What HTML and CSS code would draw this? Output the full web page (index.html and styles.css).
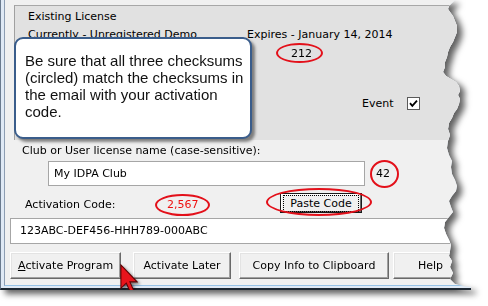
FILE: index.html
```html
<!DOCTYPE html>
<html>
<head>
<meta charset="utf-8">
<link rel="stylesheet" href="styles.css">
</head>
<body>
<div class="shot">
  <div class="win">
    <div class="frame">
      <div class="client">
        <section class="panel">
          <div class="p-title">Existing License</div>
          <div class="p-row">
            <span class="p-left">Currently - Unregistered Demo</span>
            <span>Expires - January 14, 2014</span>
          </div>
          <div class="p-sum"><span class="circled c212">212</span></div>
          <div class="p-event">
            <span>Event</span>
            <span class="check"><svg width="11" height="11" viewBox="0 0 11 11"><path d="M2 5.2 L4.3 7.8 L9 2.6" fill="none" stroke="#000" stroke-width="1.8"/></svg></span>
          </div>
        </section>
        <div class="lbl-club">Club or User license name (case-sensitive):</div>
        <div class="name-row">
          <div class="field name">My IDPA Club</div>
          <span class="circled c42">42</span>
        </div>
        <div class="code-row">
          <span class="lbl-code">Activation Code:</span>
          <span class="num-cell"><span class="circled c2567">2,567</span></span>
          <span class="circled cpaste"><button class="btn paste"><span class="focus">Paste Code</span></button></span>
        </div>
        <div class="field code">123ABC-DEF456-HHH789-000ABC</div>
        <div class="btn-row">
          <button class="btn b-act"><u>A</u>ctivate Program</button>
          <button class="btn b-later">Activate Later</button>
          <button class="btn b-copy">Copy Info to Clipboard</button>
          <button class="btn b-help">Help</button>
        </div>
      </div>
    </div>
    <div class="callout">Be sure that all three checksums (circled) match the checksums in the email with your activation code.</div>
    <svg class="cursor" width="18" height="30" viewBox="0 0 12 20"><path d="M0.6 0.6 L0.6 16.2 L4.2 12.8 L6.8 18.6 L9.1 17.6 L6.6 11.9 L11.4 11.9 Z" fill="#e8141c" stroke="#5a0000" stroke-width="0.7" stroke-linejoin="miter"/></svg>
  </div>
</div>
</body>
</html>
```

FILE: styles.css
```css
html, body {
  margin: 0;
  padding: 0;
  background: #ffffff;
}
body {
  width: 488px;
  height: 306px;
  overflow: hidden;
  font-family: "DejaVu Sans", sans-serif;
  font-size: 11px;
  line-height: 13px;
  color: #000;
}
.shot {
  width: 472px;
  filter: drop-shadow(5px 4px 3px rgba(0, 0, 0, 0.62));
}
.win {
  position: relative;
  width: 472px;
  height: 290px;
  box-sizing: border-box;
  border-left: 1px solid #6a7a8e;
  border-bottom: 2px solid #1d2731;
  background: #dfe9f5;
  clip-path: polygon(0 0, 455px 0, 452px 3px, 449px 6px, 448px 9px, 450px 12px, 453px 16px, 455px 21px, 457px 26px, 457px 32px, 455px 37px, 453px 42px, 450px 47px, 448px 52px, 447px 57px, 445px 62px, 445px 67px, 443px 72px, 446px 76px, 451px 79px, 456px 82px, 459px 86px, 460px 91px, 458px 95px, 460px 99px, 459px 104px, 457px 109px, 454px 113px, 452px 118px, 449px 123px, 448px 129px, 450px 135px, 448px 141px, 447px 148px, 449px 155px, 452px 161px, 451px 167px, 452px 174px, 455px 180px, 457px 186px, 456px 191px, 452px 196px, 449px 201px, 451px 207px, 453px 212px, 449px 217px, 445px 222px, 444px 228px, 446px 234px, 449px 240px, 451px 245px, 450px 251px, 449px 256px, 452px 261px, 450px 267px, 453px 273px, 450px 279px, 455px 284px, 463px 286px, 471px 287px, 471px 290px, 0 290px);
}
.frame {
  height: 100%;
  box-sizing: border-box;
  padding: 0 0 2px 3px;
}
.client {
  height: 100%;
  box-sizing: border-box;
  background: #f0f0f0;
  border-left: 1px solid #8d9db2;
  border-bottom: 1px solid #96c2e6;
  padding: 5px 0 0 5px;
}
.panel {
  margin-left: 4px;
  background: #e1e1e1;
  border-top: 1px solid #a7a7a7;
  border-left: 1px solid #a0a0a0;
  padding: 4px 0 30px 13px;
}
.p-row {
  margin-top: 5px;
  display: flex;
}
.p-left {
  width: 219px;
  flex: none;
}
.p-sum {
  margin-top: 6px;
  padding-left: 263px;
}
.p-event {
  margin-top: 37px;
  padding-left: 334px;
  display: flex;
  align-items: center;
  gap: 13px;
}
.check {
  width: 11px;
  height: 11px;
  border: 1px solid #5a5a5a;
  background: #fff;
  display: block;
}
.check svg {
  display: block;
}
.circled {
  position: relative;
  display: inline-block;
}
.circled::after {
  content: "";
  position: absolute;
  border: 2px solid #e3101a;
  border-radius: 50%;
  box-sizing: border-box;
}
.c212::after {
  inset: -4px -11px -3px -15px;
}
.c42::after {
  inset: -7px -9px -8px -6px;
}
.c2567 {
  color: #ee1111;
}
.c2567::after {
  inset: -4px -11px -5px -12px;
}
.cpaste {
  display: block;
}
.cpaste::after {
  inset: -5px -10px -3px -14px;
}
.lbl-club {
  margin-top: 4px;
  padding-left: 12px;
}
.name-row {
  margin-top: 4px;
  display: flex;
  align-items: center;
}
.field {
  background: #fff;
  border: 1px solid #a6a6a6;
  box-sizing: border-box;
}
.field.name {
  margin-left: 38px;
  width: 317px;
  height: 25px;
  line-height: 23px;
  padding-left: 5px;
}
.c42 {
  margin-left: 11px;
}
.code-row {
  margin-top: 7px;
  height: 20px;
  display: flex;
  align-items: center;
}
.lbl-code {
  margin-left: 15px;
  width: 142px;
  flex: none;
  padding-top: 2px;
}
.num-cell {
  width: 113px;
  flex: none;
  padding-top: 2px;
}
.btn {
  font-family: "DejaVu Sans", sans-serif;
  font-size: 11px;
  line-height: 13px;
  color: #000;
  background: #f0f0f0;
  padding: 0;
  margin: 0;
  box-sizing: border-box;
  border: 1px solid;
  border-color: #ffffff #696969 #696969 #ffffff;
  box-shadow: inset -1px -1px 0 #a0a0a0, inset 1px 1px 0 #e3e3e3;
  display: flex;
  align-items: center;
  justify-content: center;
}
.btn u {
  text-decoration: underline;
}
.paste {
  width: 82px;
  height: 20px;
  border: 1px solid #1a1a1a;
  box-shadow: inset -1px -1px 0 #696969, inset 1px 1px 0 #ffffff;
}
.focus {
  border: 1px dotted #000;
  padding: 1px 6px;
}
.field.code {
  margin-top: 5px;
  width: 470px;
  height: 26px;
  line-height: 24px;
  padding-left: 9px;
}
.btn-row {
  margin-top: 8px;
  display: flex;
  height: 27px;
}
.btn-row .btn {
  height: 27px;
  flex: none;
}
.b-act {
  width: 111px;
}
.b-later {
  margin-left: 12px !important;
  width: 98px;
}
.b-copy {
  margin-left: 8px !important;
  width: 150px;
}
.b-help {
  margin-left: 4px !important;
  width: 75px;
}
.callout {
  position: absolute;
  left: 13px;
  top: 37px;
  width: 238px;
  height: 102px;
  box-sizing: border-box;
  border: 2px solid #3a5d8b;
  border-radius: 9px;
  background: #ffffff;
  padding: 13px 2px 0 9px;
  font-family: "Liberation Sans", Arial, sans-serif;
  font-size: 15px;
  line-height: 17px;
  color: #111;
  box-shadow: 3px 3px 3px rgba(0, 0, 0, 0.45);
}
.cursor {
  position: absolute;
  left: 119px;
  top: 264px;
  filter: drop-shadow(2px 2px 1.5px rgba(0, 0, 0, 0.5));
}
```
